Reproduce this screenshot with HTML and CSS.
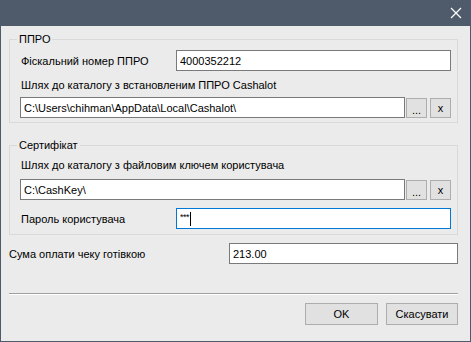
FILE: index.html
```html
<!DOCTYPE html>
<html lang="uk">
<head>
  <meta charset="UTF-8">
  <title>Налаштування ППРО</title>
  <link rel="stylesheet" href="styles.css">
</head>
<body>
<div class="win">
  <div class="titlebar">
    <svg class="close" width="12" height="12" viewBox="0 0 12 12">
      <path d="M1 1 L11 11 M11 1 L1 11" stroke="#ffffff" stroke-width="1.2" fill="none"/>
    </svg>
  </div>

  <div class="content">
    <fieldset class="group group-prro">
      <legend>ППРО</legend>
      <div class="row">
        <label class="lbl">Фіскальний номер ППРО</label>
        <input class="field" value="4000352212">
      </div>
      <div class="caption">Шлях до каталогу з встановленим ППРО Cashalot</div>
      <div class="path-row">
        <input class="field" value="C:\Users\chihman\AppData\Local\Cashalot\">
        <button class="small-btn dots">...</button>
        <button class="small-btn clear">x</button>
      </div>
    </fieldset>

    <fieldset class="group group-cert">
      <legend>Сертифікат</legend>
      <div class="caption">Шлях до каталогу з файловим ключем користувача</div>
      <div class="path-row">
        <input class="field" value="C:\CashKey\">
        <button class="small-btn dots">...</button>
        <button class="small-btn clear">x</button>
      </div>
      <div class="row row-pass">
        <label class="lbl">Пароль користувача</label>
        <div class="field focused"><span class="stars">***</span><span class="caret"></span></div>
      </div>
    </fieldset>

    <div class="row row-sum">
      <label class="lbl">Сума оплати чеку готівкою</label>
      <input class="field" value="213.00">
    </div>

    <div class="separator"></div>

    <div class="actions">
      <button class="btn">OK</button>
      <button class="btn">Скасувати</button>
    </div>
  </div>
</div>
</body>
</html>
```

FILE: styles.css
```css
* {
  box-sizing: border-box;
}

body {
  margin: 0;
  font-family: "Liberation Sans", Arial, sans-serif;
  font-size: 11px;
  color: #000;
  background: #ebebeb;
}

.win {
  width: 471px;
  height: 342px;
  background: #ebebeb;
  border: 1px solid #4f5b6a;
  border-top: 0;
}

.titlebar {
  height: 26px;
  margin: 0 -1px;
  background: #4f5b6a;
  display: flex;
  justify-content: flex-end;
  align-items: center;
  padding-right: 9px;
}

.close {
  display: block;
}

.content {
  padding: 0 12px 0 8px;
}

.group {
  margin: 6px 0 0 0;
  padding: 0 6px 4px 10px;
  border: 1px solid #d9d9d9;
  min-width: 0;
}

.group legend {
  padding: 0 2px;
  margin-left: -3px;
  line-height: 14px;
}

.group-cert {
  margin-top: 15px;
  padding-bottom: 5px;
}

.row {
  display: grid;
  grid-template-columns: 156px 1fr;
  align-items: center;
  height: 21px;
  margin-top: 4px;
}

.lbl {
  padding-left: 1px;
}

.caption {
  line-height: 14px;
  padding-left: 1px;
  margin-top: 7px;
}

.group-cert .caption {
  margin-top: 6px;
}

.field {
  height: 21px;
  width: 100%;
  border: 1px solid #7a7a7a;
  background: #fff;
  font-family: inherit;
  font-size: 11px;
  padding: 0 3px;
  margin: 0;
  color: #000;
  outline: none;
}

div.field {
  display: flex;
  align-items: center;
}

.field.focused {
  border-color: #0078d7;
}

.stars {
  font-size: 9px;
  letter-spacing: -0.5px;
  margin-top: -4px;
}

.caret {
  width: 1px;
  height: 14px;
  background: #000;
  margin-left: 1px;
}

.path-row {
  display: flex;
  align-items: center;
  height: 21px;
  margin-top: 5px;
}

.group-cert .path-row {
  margin-top: 7px;
}

.small-btn {
  flex: none;
  width: 21px;
  height: 20px;
  padding: 0;
  border: 1px solid #adadad;
  background: #e1e1e1;
  font-family: inherit;
  font-size: 11px;
  color: #000;
}

.dots {
  margin-left: 1px;
  line-height: 22px;
}

.clear {
  margin-left: 3px;
}

.row-pass {
  margin-top: 8px;
}

.row-sum {
  grid-template-columns: 220px 1fr;
  margin-top: 8px;
}

.row-sum .lbl {
  padding-left: 0;
}

.separator {
  margin-top: 29px;
  border-top: 1px solid #a0a0a0;
  border-bottom: 1px solid #ffffff;
}

.actions {
  display: flex;
  justify-content: flex-end;
  gap: 8px;
  margin-top: 8px;
}

.btn {
  height: 22px;
  width: 73px;
  border: 1px solid #adadad;
  background: #e1e1e1;
  font-family: inherit;
  font-size: 11px;
  color: #000;
  padding: 0;
}

.btn + .btn {
  width: 72px;
}
```
